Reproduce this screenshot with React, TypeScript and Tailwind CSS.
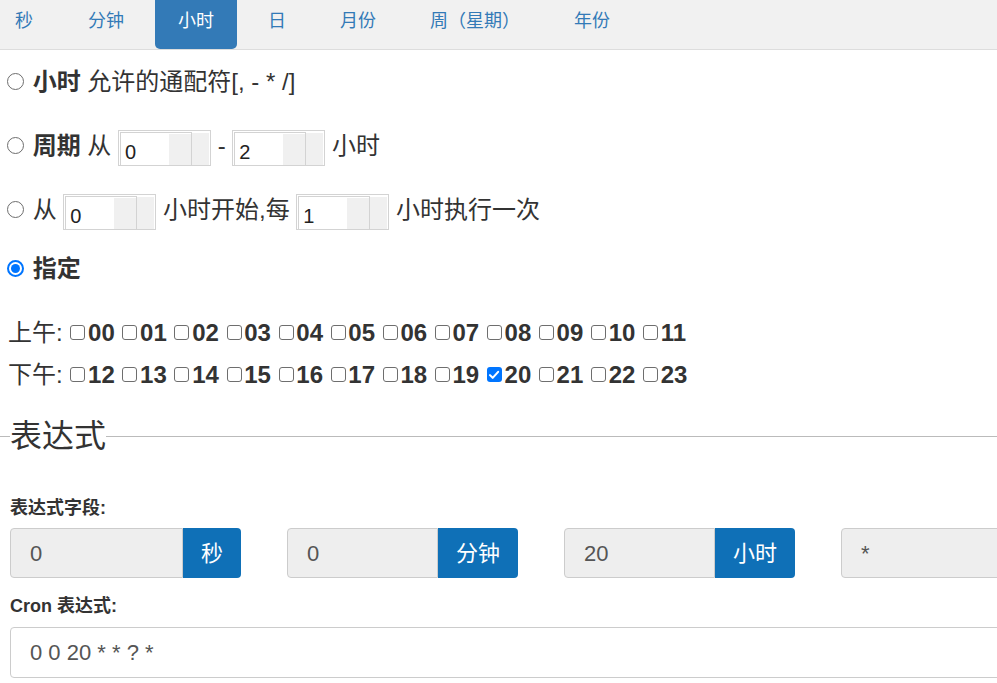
import React from "react";

const tabs = ["秒", "分钟", "小时", "日", "月份", "周（星期）", "年份"];
const am = ["00", "01", "02", "03", "04", "05", "06", "07", "08", "09", "10", "11"];
const pm = ["12", "13", "14", "15", "16", "17", "18", "19", "20", "21", "22", "23"];

function NumBox({ v }: { v: string }) {
  return (
    <span className="inline-flex align-middle w-[93px] h-[36px] border border-[#d3d3d3] bg-white p-[1px] pb-0 leading-none">
      <span className="flex w-[72px] h-full border-t border-l border-r border-[#d3d3d3] bg-white">
        <span className="w-[48px] pl-[4px] pt-[9px] text-[20px] leading-[20px] text-[#222]">{v}</span>
        <span className="flex-1 bg-[#f0f0f0] mt-[1px]" />
      </span>
      <span className="flex-1 bg-[#f0f0f0] mt-[1px]" />
    </span>
  );
}

function Radio({ checked }: { checked?: boolean }) {
  return checked ? (
    <span className="inline-flex align-middle items-center justify-center w-[17px] h-[17px] ml-[7px] mr-[2px] rounded-full border-[2px] border-[#0075ff] bg-white relative top-[-2px]">
      <span className="w-[9px] h-[9px] rounded-full bg-[#0075ff]" />
    </span>
  ) : (
    <span className="inline-block align-middle w-[17px] h-[17px] ml-[7px] mr-[2px] rounded-full border-[1.5px] border-[#6e6e6e] bg-white relative top-[-2px]" />
  );
}

function Check({ checked }: { checked?: boolean }) {
  return checked ? (
    <span className="inline-flex align-middle items-center justify-center w-[15px] h-[15px] ml-[1px] mr-[2.7px] rounded-[3px] bg-[#0075ff] relative top-[-2px]">
      <svg width="12" height="12" viewBox="0 0 11 11" fill="none">
        <path d="M1.8 5.6 L4.3 8.1 L9.3 2.6" stroke="white" strokeWidth="1.9" strokeLinecap="round" strokeLinejoin="round" />
      </svg>
    </span>
  ) : (
    <span className="inline-block align-middle w-[15px] h-[15px] ml-[1px] mr-[2.7px] rounded-[3px] border-[1.5px] border-[#6e6e6e] bg-white relative top-[-2px]" />
  );
}

function Hours({ label, list, on }: { label: string; list: string[]; on?: string }) {
  return (
    <div className="h-[42px] leading-[42px] whitespace-nowrap pl-[8px]">
      {label}{" "}
      {list.map((h) => (
        <React.Fragment key={h}>
          <Check checked={h === on} />
          <b className="font-bold">{h}</b>{" "}
        </React.Fragment>
      ))}
    </div>
  );
}

function Group({ v, unit, last }: { v: string; unit?: string; last?: boolean }) {
  return (
    <div className="flex w-[231px] h-[50px] shrink-0">
      <div
        className={
          "flex-1 flex items-center pl-[19px] bg-[#eeeeee] border border-[#cccccc] text-[22px] text-[#555] " +
          (last ? "rounded-[4px]" : "rounded-l-[4px]")
        }
      >
        {v}
      </div>
      {unit && (
        <div className="flex items-center px-[18px] bg-[#0f70b7] text-white text-[22px] rounded-r-[4px]">
          {unit}
        </div>
      )}
    </div>
  );
}

export default function App() {
  return (
    <div className="w-[997px] h-[683px] overflow-hidden bg-white text-[#333] font-['Liberation_Sans','Noto_Sans_CJK_SC',sans-serif]">
      <div className="w-[1200px]">
        <div className="flex gap-[8px] h-[50px] bg-[#f1f1f1] border-b border-[#dddddd]">
          {tabs.map((t, i) => (
            <div
              key={t}
              className={
                "h-[49px] pt-[9px] text-[18px] leading-[24px] " +
                (i === 0 ? "pl-[15px] pr-[24px] " : "px-[23px] ") +
                (t === "小时" ? "bg-[#337ab7] text-white rounded-b-[5px]" : "text-[#337ab7]")
              }
            >
              {t}
            </div>
          ))}
        </div>

        <div className="text-[24px]">
          <div className="h-[64px] leading-[64px] whitespace-nowrap">
            <Radio /> <b className="font-bold">小时</b> 允许的通配符[, - * /]
          </div>
          <div className="h-[64px] leading-[64px] whitespace-nowrap">
            <Radio /> <b className="font-bold">周期</b> 从 <NumBox v="0" /> - <NumBox v="2" /> 小时
          </div>
          <div className="h-[64px] leading-[64px] whitespace-nowrap">
            <Radio /> 从 <NumBox v="0" /> 小时开始,每 <NumBox v="1" /> 小时执行一次
          </div>
          <div className="h-[54px] leading-[54px] whitespace-nowrap">
            <Radio checked /> <b className="font-bold">指定</b>
          </div>
          <div className="mt-[16px]">
            <Hours label="上午:" list={am} />
            <Hours label="下午:" list={pm} on="20" />
          </div>
        </div>

        <div className="mt-[20px] h-[40px] flex items-center">
          <div className="w-[10px] border-t border-[#bbbbbb]" />
          <div className="text-[32px] leading-[40px] text-[#333]">表达式</div>
          <div className="flex-1 border-t border-[#bbbbbb]" />
        </div>

        <div className="px-[10px]">
          <div className="mt-[40px] h-[24px] leading-[24px] text-[18px] font-bold text-[#333]">表达式字段:</div>
          <div className="mt-[8px] flex gap-[46px]">
            <Group v="0" unit="秒" />
            <Group v="0" unit="分钟" />
            <Group v="20" unit="小时" />
            <Group v="*" last />
          </div>
          <div className="mt-[16px] h-[24px] leading-[24px] text-[18px] font-bold text-[#333]">Cron 表达式:</div>
          <div className="mt-[9px] h-[51px] w-[1100px] border border-[#cccccc] rounded-[4px] flex items-center pl-[19px] text-[22px] text-[#555]">
            0 0 20 * * ? *
          </div>
        </div>
      </div>
    </div>
  );
}
